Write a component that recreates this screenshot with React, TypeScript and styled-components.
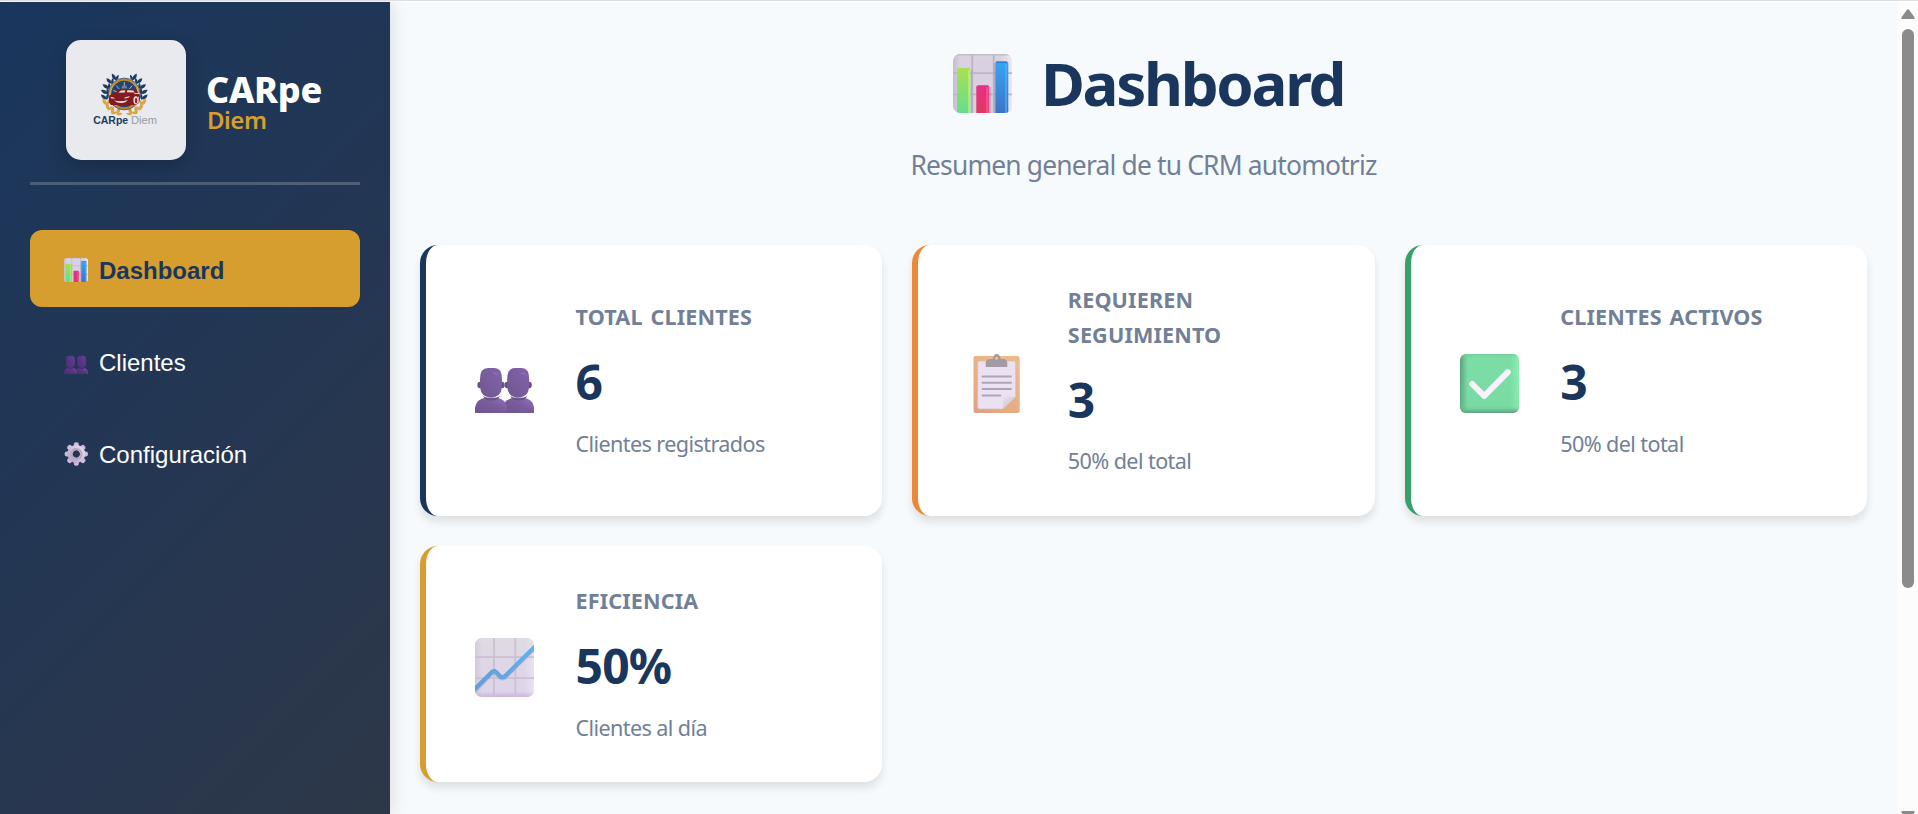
import React from 'react';
import styled, { createGlobalStyle, css } from 'styled-components';

const GlobalStyle = createGlobalStyle`
  *, *::before, *::after { box-sizing: border-box; }
  body { margin: 0; overflow: hidden; background: #f7fafc; }
  h1, h2, p { margin: 0; }
`;

const uiFont = css`
  font-family: 'Segoe UI', 'Noto Sans', sans-serif;
`;

const Window = styled.div`
  ${uiFont}
  display: flex;
  width: 100%;
  height: 100vh;
  border-top: 1px solid #dedede;
  padding-top: 1px;
  background: #fff;
  overflow: hidden;
`;

const Sidebar = styled.aside`
  flex: 0 0 390px;
  padding: 38px 30px 0;
  background: linear-gradient(135deg, #1a365d 0%, #2d3748 100%);
  box-shadow: 3px 0 15px rgba(0, 0, 0, 0.1);
  z-index: 1;
`;

const Brand = styled.header`
  display: flex;
  align-items: center;
  gap: 20px;
  height: 145px;
  padding: 0 0 22px 36px;
  border-bottom: 3px solid rgba(255, 255, 255, 0.2);
`;

const LogoTile = styled.div`
  flex: none;
  width: 120px;
  height: 120px;
  border-radius: 15px;
  background: #e8eaee;
  box-shadow: 0 6px 18px rgba(0, 0, 0, 0.2);
`;

const BrandText = styled.div`
  display: flex;
  flex-direction: column;
  padding-top: 4px;
`;

const BrandName = styled.span`
  color: #fff;
  font-size: 36px;
  font-weight: 800;
  line-height: 36px;
  letter-spacing: -0.3px;
`;

const BrandSub = styled.span`
  padding-left: 1px;
  color: #d69e2e;
  font-size: 24px;
  font-weight: 600;
  line-height: 24px;
  letter-spacing: -0.5px;
`;

const Nav = styled.nav`
  display: flex;
  flex-direction: column;
  gap: 15px;
  padding-top: 45px;
`;

const NavItem = styled.button<{ $active?: boolean }>`
  display: flex;
  align-items: center;
  gap: 11px;
  height: 77px;
  padding: 3px 34px 0;
  border: 0;
  border-radius: 12px;
  background: ${(p) => (p.$active ? '#d69e2e' : 'transparent')};
  color: ${(p) => (p.$active ? '#1a365d' : '#fff')};
  font: ${(p) => (p.$active ? 700 : 400)} 24px 'Liberation Sans', Arial, sans-serif;
  text-align: left;

  svg { width: 24px; height: 24px; }
  span { padding-top: 1px; }
`;

const Main = styled.main`
  flex: 1;
  min-width: 0;
  padding: 30px;
  background: #f7fafc;
`;

const PageHeader = styled.header`
  display: flex;
  flex-direction: column;
  align-items: center;
  height: 213px;
`;

const Title = styled.h1`
  display: flex;
  align-items: center;
  gap: 29px;
  height: 96px;
  padding: 7px 0 0 10px;
  color: #1a365d;
  font-size: 60px;
  font-weight: 700;
  line-height: 94px;
  letter-spacing: -2.3px;

  svg { width: 59px; height: 59px; }
  span { padding-bottom: 2px; }
`;

const Subtitle = styled.p`
  padding-top: 16px;
  color: #718096;
  font-size: 26.4px;
  line-height: 42px;
  letter-spacing: -0.82px;
`;

const Cards = styled.section`
  display: grid;
  grid-template-columns: repeat(3, 1fr);
  gap: 30px;
`;

const Card = styled.article<{ $accent: string }>`
  display: flex;
  align-items: center;
  gap: 30px;
  padding: 38px 37.5px 37px;
  border-left: 6px solid ${(p) => p.$accent};
  border-radius: 18px;
  background: #fff;
  box-shadow: 0 6px 9px rgba(0, 0, 0, 0.1);
`;

const CardIcon = styled.div`
  display: flex;
  justify-content: center;
  flex: 0 0 82px;
  padding-top: 6px;
  opacity: 0.8;

  svg { width: 59px; height: 59px; }
`;

const CardBody = styled.div`
  flex: 1;
  min-width: 0;
`;

const CardLabel = styled.h2`
  max-width: 220px;
  color: #718096;
  font-size: 21.6px;
  font-weight: 700;
  line-height: 34.5px;
  letter-spacing: 0.15px;
  word-spacing: 2px;
`;

const CardValue = styled.p`
  padding: 9.5px 0 6.2px;
  color: #1a365d;
  font-size: 48px;
  font-weight: 700;
  line-height: 76.8px;
  letter-spacing: -0.8px;
`;

const CardNote = styled.p`
  color: #718096;
  font-size: 21.6px;
  line-height: 34.5px;
  letter-spacing: -0.6px;
`;

const ScrollTrack = styled.div`
  display: flex;
  flex: 0 0 21px;
  flex-direction: column;
  align-items: center;
  padding: 7px 0 0 1px;
  background: #fcfcfc;

  svg { flex: none; display: block; }
`;

const ScrollThumb = styled.div`
  width: 12px;
  height: 559px;
  margin: 10px 0 223px;
  flex: none;
  border-radius: 6px;
  background: #8b8b8b;
`;

const BarsIcon = ({ id }: { id: string }) => (
  <svg viewBox="0 0 59 59">
    <defs>
      <linearGradient id={`${id}p`} x1="0" x2="1"><stop offset="0" stopColor="#c4bdcc" /><stop offset=".12" stopColor="#d9d2e1" /><stop offset=".8" stopColor="#d9d2e1" /><stop offset="1" stopColor="#efe7f3" /></linearGradient>
      <linearGradient id={`${id}g`} x2="0" y2="1"><stop stopColor="#a9e050" /><stop offset="1" stopColor="#63dd92" /></linearGradient>
      <linearGradient id={`${id}r`} x2="0" y2="1"><stop stopColor="#e82f86" /><stop offset="1" stopColor="#de3a60" /></linearGradient>
      <linearGradient id={`${id}b`} x2="0" y2="1"><stop stopColor="#35a5f5" /><stop offset="1" stopColor="#3d72c4" /></linearGradient>
      <clipPath id={`${id}c`}><rect width="59" height="59" rx="7" /></clipPath>
    </defs>
    <g clipPath={`url(#${id}c)`}>
      <rect width="59" height="59" fill={`url(#${id}p)`} />
      <path d="M0 .7h59" stroke="#c3bcc9" strokeWidth="1.4" />
      <path d="M19.3 0v59M40.7 0v59M0 19.2h59M0 40.3h59" stroke="#bdb5c4" strokeWidth="1.8" />
      <path d="M18.5 16v43M37.5 33v26M41.5 9v50" stroke="#8e80aa" strokeWidth="1.6" opacity=".35" />
      <path d="M4 61V16q0-2 2-2h9.300q2 0 2 2v45z" fill={`url(#${id}g)`} />
      <path d="M16.200 16v43" stroke="#c5fa72" strokeWidth="2" opacity=".65" />
      <path d="M23.300 61V33.300q0-2 2-2h9q2 0 2 2V61z" fill={`url(#${id}r)`} />
      <path d="M34.300 33v26" stroke="#fa5594" strokeWidth="2.500" opacity=".8" />
      <path d="M42.300 61V9.500q0-2 2-2h9q2 0 2 2V61z" fill={`url(#${id}b)`} />
      <path d="M43 8.200h11" stroke="#2f7fd6" strokeWidth="1.400" />
      <path d="M53 10v49" stroke="#52b4fb" strokeWidth="2" opacity=".6" />
    </g>
  </svg>
);

const PeopleIcon = ({ id }: { id: string }) => (
  <svg viewBox="0 0 59 59">
    <defs>
      <linearGradient id={`${id}h`} x1="0" y1="1" x2="1" y2="0"><stop stopColor="#4b2f73" /><stop offset="1" stopColor="#643c98" /></linearGradient>
      <linearGradient id={`${id}s`} x1="0" y1="1" x2="1" y2="0"><stop stopColor="#492b70" /><stop offset=".55" stopColor="#573583" /><stop offset="1" stopColor="#7a4bb5" /></linearGradient>
    </defs>
    <path d="M27 59.500V54q2-9 13-10.500h8Q58 45 59 53v6.500z" fill={`url(#${id}s)`} />
    <path d="M0 59.500V54q1-9 11-10.500h10Q31 45 32 53v6.500z" fill={`url(#${id}s)`} />
    {[0, 27.200].map((x) => (
      <g key={x} transform={`translate(${x} 0)`}>
        <ellipse cx="5" cy="31" rx="2.600" ry="3.300" fill="#432264" />
        <ellipse cx="27" cy="31" rx="2.600" ry="3.300" fill="#432264" />
        <path d="M8 42q8 5.500 17 0l-2 3q-6 3-13 0z" fill="#432868" />
        <path d="M5 25q0-11 8-11h6.500q7.500 0 7.500 11v8q-1 10.500-11 10.500Q6 43.500 5 33z" fill={`url(#${id}h)`} />
        <path d="M17 19.500q4-2 7.500.5-3 1.500-7.500-.5" fill="#7a4fb0" opacity=".7" />
      </g>
    ))}
  </svg>
);

const ClipboardIcon = () => (
  <svg viewBox="0 0 59 59">
    <defs>
      <linearGradient id="board" x1="0" y1="1" x2=".6" y2="0"><stop stopColor="#d88a66" /><stop offset=".35" stopColor="#df9762" /><stop offset="1" stopColor="#eba871" /></linearGradient>
      <linearGradient id="fold" x1="0" y1="0" x2=".7" y2=".7"><stop stopColor="#e7dff0" /><stop offset="1" stopColor="#c3b7d2" /></linearGradient>
    </defs>
    <rect x="6.500" y="2" width="46.200" height="57" rx="2" fill="url(#board)" />
    <path d="M12.700 7h34q2 0 2 2v33.700L36 55H12.700q-2 0-2-2V9q0-2 2-2" fill="#e6dcf1" stroke="#d6aa9e" strokeWidth=".7" />
    <path d="M35.500 55V44.500q0-2 2-2h11.200z" fill="url(#fold)" />
    <path d="M18.700 13V9q0-4 5-4h2q1-5 4-5t4 5h2q4.600 0 4.600 4v4zM29.600 2.500a1.700 1.700 0 1 0 0 3.400 1.700 1.700 0 0 0 0-3.400" fill="#8b818e" fillRule="evenodd" />
    <path d="M15.500 22.500h28.500M15.500 28.800h28.500M15.500 35.100h28.500M15.500 41.400h17.800" stroke="#9990a0" strokeWidth="2" strokeLinecap="round" />
  </svg>
);

const CheckIcon = () => (
  <svg viewBox="0 0 59 59">
    <defs>
      <linearGradient id="ckx"><stop stopColor="#34895c" /><stop offset=".13" stopColor="#5bd58f" /><stop offset=".85" stopColor="#5bd58f" /><stop offset="1" stopColor="#6feea0" /></linearGradient>
      <linearGradient id="cky" x2="0" y2="1"><stop stopColor="#48bd78" stopOpacity=".8" /><stop offset=".08" stopColor="#5bd58f" stopOpacity="0" /><stop offset=".88" stopColor="#52c486" stopOpacity=".2" /><stop offset="1" stopColor="#36895e" /></linearGradient>
    </defs>
    <rect width="59" height="59" rx="6" fill="url(#ckx)" />
    <rect width="59" height="59" rx="6" fill="url(#cky)" />
    <path d="M12.200 30 24.200 42 47.800 18.200" fill="none" stroke="#fbeffb" strokeWidth="6" strokeLinecap="round" strokeLinejoin="round" />
  </svg>
);

const TrendIcon = () => (
  <svg viewBox="0 0 59 59">
    <defs>
      <linearGradient id="trx"><stop stopColor="#b8b0c2" /><stop offset=".12" stopColor="#d8d0e0" /><stop offset=".82" stopColor="#d8cfe2" /><stop offset="1" stopColor="#eee7f3" /></linearGradient>
      <linearGradient id="try" x2="0" y2="1"><stop stopColor="#d9d3dc" /><stop offset=".9" stopColor="#d3c1e6" stopOpacity=".6" /><stop offset="1" stopColor="#a77fca" /></linearGradient>
      <linearGradient id="trl" x2="1" y2="0"><stop stopColor="#3f85cf" /><stop offset="1" stopColor="#38a0e8" /></linearGradient>
      <clipPath id="trc"><rect width="59" height="59" rx="7" /></clipPath>
    </defs>
    <g clipPath="url(#trc)">
      <rect width="59" height="59" fill="url(#trx)" />
      <rect width="59" height="59" fill="url(#try)" opacity=".6" />
      <path d="M19 0v59M40.300 0v59M0 19.200h59M0 40.200h59" stroke="#bcb3c6" strokeWidth="1.800" />
      <path d="M-3 56 17 35.500q2-2 4 0l4 4q2.500 2 5 0L62 8" fill="none" stroke="#8478a8" strokeWidth="4.500" opacity=".3" />
      <path d="M-3 54 17 34q2-2 4 0l4 4.300q2.500 2 5 0L62 6.500" fill="none" stroke="url(#trl)" strokeWidth="4.400" />
    </g>
  </svg>
);

const GearIcon = () => (
  <svg viewBox="0 0 24 24">
    <defs><linearGradient id="gear" x1="0" y1="1" x2="1" y2="0"><stop stopColor="#b9a4cf" /><stop offset="1" stopColor="#e2d9e8" /></linearGradient></defs>
    <g transform="translate(12.300 12)">
      {[0, 45, 90, 135, 180, 225, 270, 315].map((a) => (
        <path key={a} d="M-2.900-7-2.300-10.500Q-2-11.700 0-11.700T2.300-10.500L2.900-7z" fill="#cbbcd9" transform={`rotate(${a})`} />
      ))}
      <circle r="6.300" fill="none" stroke="url(#gear)" strokeWidth="5.200" />
      <circle r="5" fill="none" stroke="#b3a7bd" strokeWidth="2" />
    </g>
  </svg>
);

const leaves = [
  [-6, 21, 60], [-12, 20, 50], [-17, 15.500, 25], [-20, 10, 5], [-20.500, 4, -15],
  [-20, -2, -25], [-18.500, -8, -20], [-15, -14, -10], [-10, -18.500, 5],
];

const CarLogo = () => (
  <svg width="120" height="120" viewBox="0 0 120 120">
    <defs><linearGradient id="ring" x2="0" y2="1"><stop stopColor="#b8862f" /><stop offset=".5" stopColor="#e0b45c" /><stop offset="1" stopColor="#b9852d" /></linearGradient></defs>
    <g transform="translate(58.300 53.500)">
      {[1, -1].map((s) => (
        <g key={s} transform={`scale(${s} 1)`}>
          {leaves.map(([x, y, r], i) => (
            <g key={i} transform={`translate(${x * 0.94} ${y * 0.88}) rotate(${r})`} fill={i < 4 ? '#d9a441' : '#203c62'}>
              <path d="M0 3.200Q-4.200 0-1.500-4.600 2.400-1 0 3.200" transform="rotate(-25)" />
              <path d="M1 3.200Q0-.5 3.400-2.800 4.600 1.200 1 3.200" />
            </g>
          ))}
        </g>
      ))}
      <circle r="14.300" cy=".5" fill="#27436b" stroke="url(#ring)" strokeWidth="2.200" />
      <circle r="15.900" cy=".5" fill="none" stroke="#2a4263" strokeWidth=".8" />
      <path d="M0-11.500v5M-8-8l3 3.500M8-8 5-4.500M-11-3l4 1.500M11-3 7-1.500" stroke="#b7bfc6" strokeWidth=".9" />
      <path d="M-2-8h4l1 3h-6z" fill="#6f8090" />
      <path d="M-15 2q2-2 6-2.800L-5-4q8-1.200 16.500.3l3.500 4.200q1.500 4-.5 9.500l-5 1.500H-13q-2.500-1-2.500-5z" fill="#84191f" />
      <path d="M-6-.8-3.500-3 1-3.300.5-1zM2.500-1.200l.5-2q4-.2 6 .3L10.500-1z" fill="#e5dcdd" />
      <path d="M-13.500 3.500q3 .2 4.500 1.200-3 .8-4.500-.3M0 4.300q2.500-1.500 6-1.500Q4 5 0 5zM-10.500 7q7 1.800 14-.5Q1 9.500-3 9.500T-10.500 7" fill="#f4e9ea" />
      <ellipse cx="11.500" cy="6.800" rx="2.400" ry="4" fill="#e9dfe0" />
      <ellipse cx="11.800" cy="7" rx="1.200" ry="2.700" fill="#941f25" />
      <path d="M10 0h5M14 3v7" stroke="#eee" strokeWidth=".8" />
    </g>
    <text x="27.200" y="84" fontFamily="'Liberation Sans', Arial, sans-serif" fontWeight="700" fontSize="10.800" textLength="35" lengthAdjust="spacingAndGlyphs" fill="#203c62">CARpe</text>
    <text x="65" y="84" fontFamily="'Liberation Sans', Arial, sans-serif" fontSize="10.800" textLength="26" lengthAdjust="spacingAndGlyphs" fill="#999ca0">Diem</text>
  </svg>
);

const navItems = [
  { label: 'Dashboard', icon: <BarsIcon id="nb" />, active: true },
  { label: 'Clientes', icon: <PeopleIcon id="np" /> },
  { label: 'Configuración', icon: <GearIcon /> },
];

const stats = [
  { label: 'TOTAL CLIENTES', value: '6', note: 'Clientes registrados', accent: '#1a365d', icon: <PeopleIcon id="cp" /> },
  { label: 'REQUIEREN SEGUIMIENTO', value: '3', note: '50% del total', accent: '#ed8936', icon: <ClipboardIcon /> },
  { label: 'CLIENTES ACTIVOS', value: '3', note: '50% del total', accent: '#38a169', icon: <CheckIcon /> },
  { label: 'EFICIENCIA', value: '50%', note: 'Clientes al día', accent: '#d69e2e', icon: <TrendIcon /> },
];

export default function App() {
  return (
    <Window>
      <GlobalStyle />
      <Sidebar>
        <Brand>
          <LogoTile><CarLogo /></LogoTile>
          <BrandText>
            <BrandName>CARpe</BrandName>
            <BrandSub>Diem</BrandSub>
          </BrandText>
        </Brand>
        <Nav>
          {navItems.map((n) => (
            <NavItem key={n.label} $active={n.active}>
              {n.icon}
              <span>{n.label}</span>
            </NavItem>
          ))}
        </Nav>
      </Sidebar>
      <Main>
        <PageHeader>
          <Title><BarsIcon id="tb" /><span>Dashboard</span></Title>
          <Subtitle>Resumen general de tu CRM automotriz</Subtitle>
        </PageHeader>
        <Cards>
          {stats.map((s) => (
            <Card key={s.label} $accent={s.accent}>
              <CardIcon>{s.icon}</CardIcon>
              <CardBody>
                <CardLabel>{s.label}</CardLabel>
                <CardValue>{s.value}</CardValue>
                <CardNote>{s.note}</CardNote>
              </CardBody>
            </Card>
          ))}
        </Cards>
      </Main>
      <ScrollTrack>
        <svg width="14" height="10" viewBox="0 0 14 10"><path d="M5.600 1.200q1.400-2 2.800 0l5 7q.8 1.800-1 1.800H1.600Q-.2 10 .6 8.200z" fill="#8b8b8b" /></svg>
        <ScrollThumb />
        <svg width="14" height="10" viewBox="0 0 14 10"><path d="M5.600 8.800q1.400 2 2.800 0l5-7q.8-1.800-1-1.800H1.600Q-.2 0 .6 1.800z" fill="#8b8b8b" /></svg>
      </ScrollTrack>
    </Window>
  );
}
